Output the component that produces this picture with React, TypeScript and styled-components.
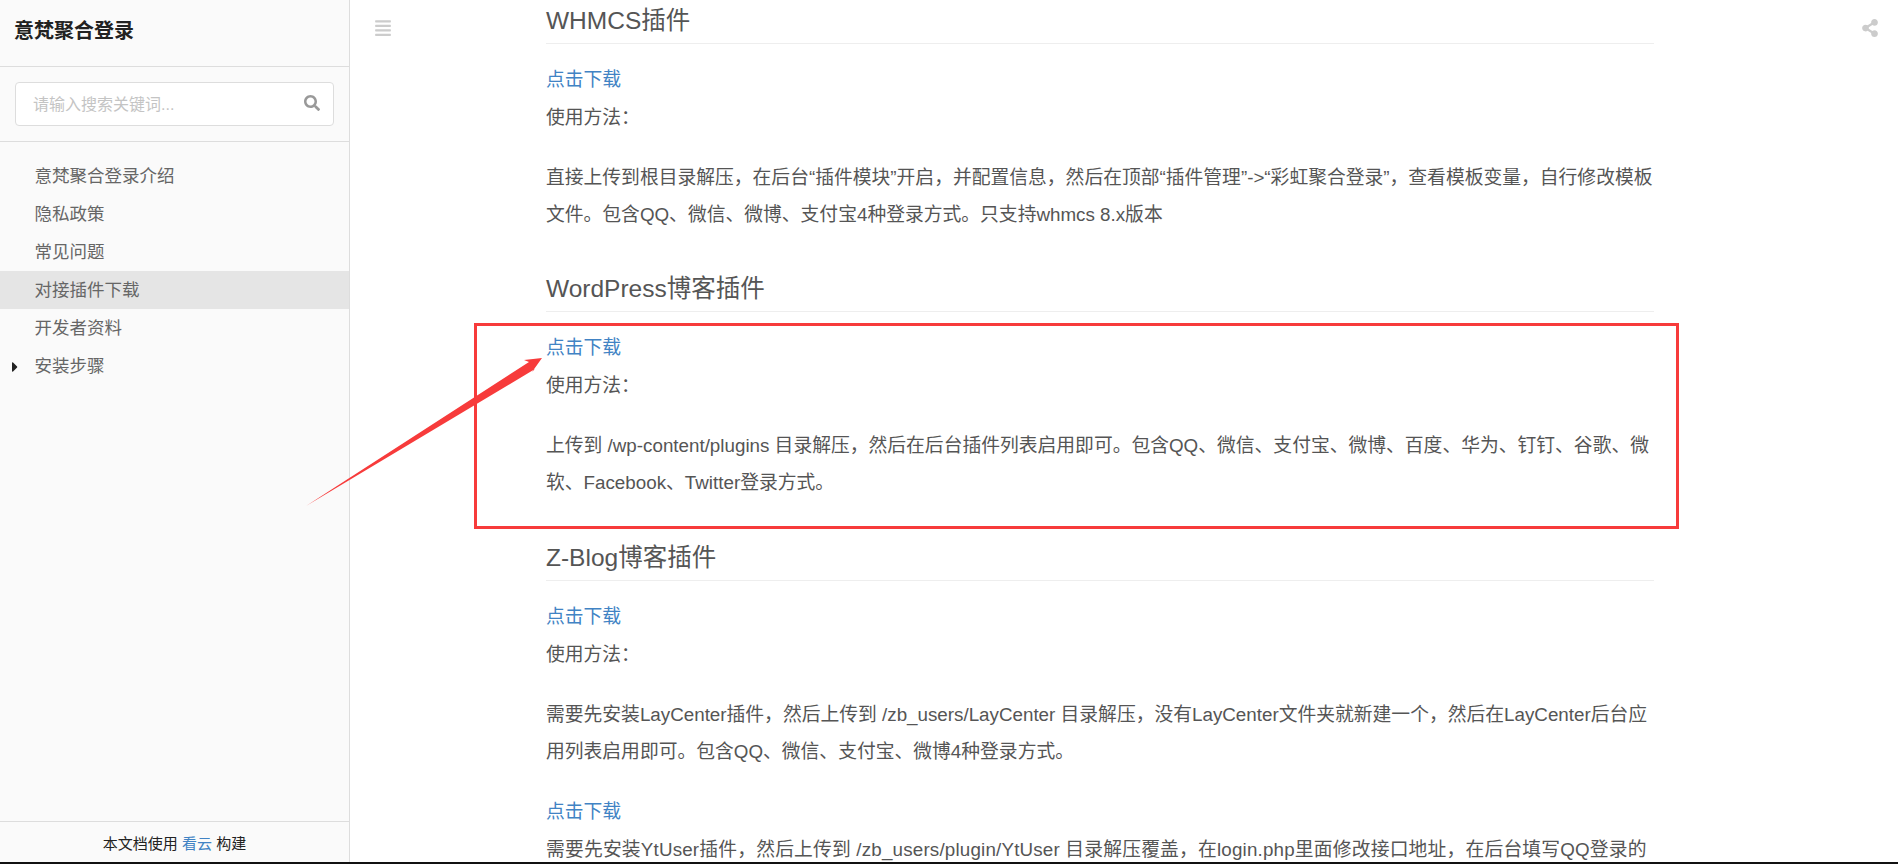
import styled, { createGlobalStyle } from 'styled-components';
import { FaAlignJustify, FaCaretRight, FaSearch, FaShareAlt } from 'react-icons/fa';

const navItems = ['意梵聚合登录介绍', '隐私政策', '常见问题', '对接插件下载', '开发者资料', '安装步骤'];

export default function App() {
  return (
    <Page>
      <GlobalStyle />
      <Sidebar>
        <Title>意梵聚合登录</Title>
        <SearchBlock>
          <SearchBox>
            <SearchHint>请输入搜索关键词...</SearchHint>
            <SearchIcon />
          </SearchBox>
        </SearchBlock>
        <Nav>
          {navItems.map((item) => (
            <NavItem key={item} $active={item === '对接插件下载'}>
              {item === '安装步骤' && <Caret />}
              {item}
            </NavItem>
          ))}
        </Nav>
        <SideFooter>
          本文档使用 <Link>看云</Link> 构建
        </SideFooter>
      </Sidebar>

      <Main>
        <ToolLeft>
          <FaAlignJustify />
        </ToolLeft>
        <Article>
          <Heading>WHMCS插件</Heading>
          <Download>点击下载</Download>
          <Line>使用方法：</Line>
          <Para>
            直接上传到根目录解压，在后台“插件模块”开启，并配置信息，然后在顶部“插件管理”-&gt;“彩虹聚合登录”，查看模板变量，自行修改模板文件。包含QQ、微信、微博、支付宝4种登录方式。只支持whmcs 8.x版本
          </Para>

          <Heading>WordPress博客插件</Heading>
          <Download>点击下载</Download>
          <Line>使用方法：</Line>
          <Para>
            上传到 /wp-content/plugins 目录解压，然后在后台插件列表启用即可。包含QQ、微信、支付宝、微博、百度、华为、钉钉、谷歌、微软、Facebook、Twitter登录方式。
          </Para>

          <Heading>Z-Blog博客插件</Heading>
          <Download>点击下载</Download>
          <Line>使用方法：</Line>
          <Para>
            需要先安装LayCenter插件，然后上传到 /zb_users/LayCenter 目录解压，没有LayCenter文件夹就新建一个，然后在LayCenter后台应用列表启用即可。包含QQ、微信、支付宝、微博4种登录方式。
          </Para>
          <Download>点击下载</Download>
          <WideLine>
            需要先安装YtUser插件，然后上传到 /zb_users/plugin/YtUser 目录解压覆盖，在login.php里面修改接口地址，在后台填写QQ登录的
          </WideLine>
        </Article>
        <ToolRight>
          <FaShareAlt />
        </ToolRight>
      </Main>

      <RedFrame />
      <Arrow viewBox="0 0 1898 864">
        <polygon points="306,506 529,362 524,360 542,358 532,372 535,369" fill="#f73b3b" />
      </Arrow>
    </Page>
  );
}

const GlobalStyle = createGlobalStyle`
  html, body {
    margin: 0;
    padding: 0;
    background: #fff;
  }
  * {
    box-sizing: border-box;
  }
`;

const Page = styled.div`
  position: relative;
  display: flex;
  height: 864px;
  overflow: hidden;
  border-bottom: 2px solid #111;
  font-family: 'Liberation Sans', 'Noto Sans CJK SC', sans-serif;
`;

const Sidebar = styled.aside`
  display: flex;
  flex-direction: column;
  flex: 0 0 350px;
  background: #fafafa;
  border-right: 1px solid #ddd;
`;

const Title = styled.div`
  height: 67px;
  padding-left: 14px;
  border-bottom: 1px solid #ddd;
  font-size: 20px;
  font-weight: 700;
  line-height: 63px;
  color: #222;
`;

const SearchBlock = styled.div`
  height: 75px;
  padding: 15px;
  border-bottom: 1px solid #ddd;
`;

const SearchBox = styled.div`
  display: flex;
  align-items: center;
  justify-content: space-between;
  width: 319px;
  height: 44px;
  padding: 0 13px 2px 17px;
  background: #fff;
  border: 1px solid #ddd;
  border-radius: 4px;
`;

const SearchHint = styled.span`
  font-size: 16px;
  color: #c4c4c4;
`;

const SearchIcon = styled(FaSearch)`
  width: 16px;
  height: 16px;
  color: #999;
`;

const Nav = styled.nav`
  flex: 1;
  padding-top: 15px;
`;

const NavItem = styled.div<{ $active?: boolean }>`
  position: relative;
  height: 38px;
  padding-left: 34.5px;
  font-size: 17.5px;
  line-height: 38px;
  color: #666;
  background: ${({ $active }) => ($active ? '#e5e5e5' : 'transparent')};
`;

const Caret = styled(FaCaretRight)`
  position: absolute;
  left: 12px;
  top: 12px;
  width: 6px;
  height: 16px;
  color: #222;
`;

const SideFooter = styled.div`
  height: 41px;
  border-top: 1px solid #ddd;
  font-size: 15px;
  line-height: 43px;
  text-align: center;
  color: #222;
`;

const Main = styled.main`
  position: relative;
  flex: 1;
  padding-left: 196px;
`;

const ToolLeft = styled.div`
  position: absolute;
  left: 24px;
  top: 19px;
  font-size: 18px;
  line-height: 1;
  color: #ccc;
`;

const ToolRight = styled.div`
  position: absolute;
  right: 19px;
  top: 19px;
  font-size: 18px;
  line-height: 1;
  color: #ccc;
`;

const Article = styled.article`
  width: 1108px;
  padding-top: 1px;
  font-size: 18.8px;
  color: #555;
`;

const Heading = styled.h2`
  height: 43px;
  margin: 36px 0 17px;
  border-bottom: 1px solid #eee;
  font-size: 24.5px;
  font-weight: 400;
  line-height: 39px;
  color: #555;

  &:first-child {
    margin-top: 0;
  }
`;

const Link = styled.a`
  color: #4183c4;
`;

const Download = styled(Link)`
  display: block;
  line-height: 38px;
`;

const Line = styled.div`
  line-height: 38px;
`;

const WideLine = styled(Line)`
  letter-spacing: 0.18px;
`;

const Para = styled.p`
  margin: 23px 0;
  line-height: 36.7px;
`;

const RedFrame = styled.div`
  position: absolute;
  left: 474px;
  top: 323px;
  width: 1205px;
  height: 206px;
  border: 3px solid #f73b3b;
  pointer-events: none;
`;

const Arrow = styled.svg`
  position: absolute;
  left: 0;
  top: 0;
  width: 1898px;
  height: 864px;
  pointer-events: none;
`;
